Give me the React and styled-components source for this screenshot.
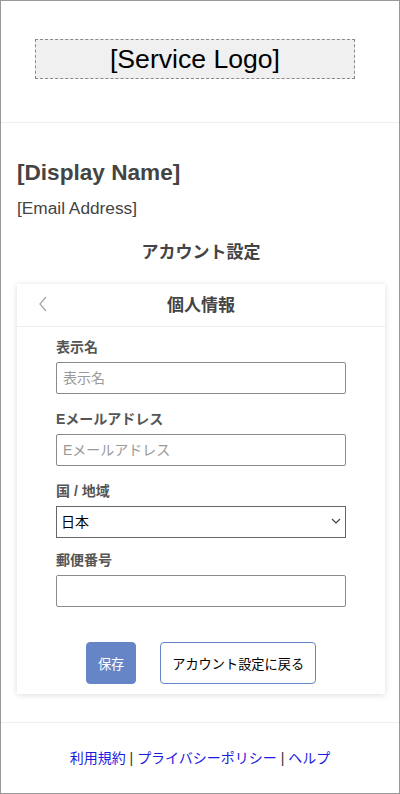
import React from 'react';
import styled, { createGlobalStyle } from 'styled-components';

const GlobalStyle = createGlobalStyle`
  html, body {
    margin: 0;
    padding: 0;
    background: #fff;
  }
  * {
    box-sizing: border-box;
  }
`;

const FONT = `"Liberation Sans", Arial, "Noto Sans CJK JP", sans-serif`;

const Frame = styled.div`
  width: 400px;
  height: 794px;
  border: 1px solid #999;
  overflow: hidden;
  font-family: ${FONT};
  color: #444;
  display: flex;
  flex-direction: column;
`;

const Header = styled.header`
  display: flex;
  justify-content: flex-start;
  padding: 38px 0 43px 34px;
  border-bottom: 1px solid #eee;
`;

const LogoBox = styled.div`
  width: 320px;
  height: 40px;
  border: 1px dashed #888;
  background: #f0f0f0;
  color: #000;
  font-size: 26.6px;
  line-height: 38px;
  text-align: center;
`;

const Main = styled.main`
  padding: 37px 14px 0 16px;
`;

const DisplayName = styled.h2`
  margin: 0;
  font-size: 22.6px;
  line-height: 26px;
  font-weight: bold;
  color: #444;
`;

const Email = styled.p`
  margin: 12px 0 0;
  font-size: 17.3px;
  line-height: 20px;
  color: #444;
`;

const SectionTitle = styled.h3`
  margin: 23px 0 19px;
  font-size: 17px;
  line-height: 24px;
  font-weight: bold;
  text-align: center;
  color: #444;
`;

const Card = styled.section`
  width: 368px;
  background: #fff;
  box-shadow: 0 1px 6px rgba(0, 0, 0, 0.14);
`;

const CardHeader = styled.div`
  position: relative;
  height: 43px;
  display: flex;
  align-items: center;
  justify-content: center;
  padding-bottom: 4px;
  border-bottom: 1px solid #eee;
`;

const BackButton = styled.button`
  position: absolute;
  left: 16px;
  top: 10px;
  width: 20px;
  height: 20px;
  padding: 0;
  border: none;
  background: none;
  display: flex;
  align-items: center;
  justify-content: center;
  cursor: pointer;
`;

const CardTitle = styled.h4`
  margin: 0;
  font-size: 17px;
  font-weight: bold;
  color: #444;
`;

const Form = styled.form`
  display: flex;
  flex-direction: column;
  padding: 10px 39px 10px;
`;

const Field = styled.div`
  display: flex;
  flex-direction: column;
  margin-bottom: ${({ $gap }) => $gap};
`;

const Label = styled.label`
  font-size: 14px;
  line-height: 20px;
  font-weight: bold;
  color: #555;
  margin-bottom: 5px;
`;

const Input = styled.input`
  width: 290px;
  height: 32px;
  border: 1px solid #8a8a8a;
  border-radius: 2px;
  padding: 0 6px;
  font-family: ${FONT};
  font-size: 14px;
  color: #222;
  background: #fff;

  &::placeholder {
    color: #999;
  }
`;

const SelectWrap = styled.div`
  position: relative;
  width: 290px;
`;

const Select = styled.select`
  appearance: none;
  width: 290px;
  height: 32px;
  border: 1px solid #666;
  border-radius: 0;
  padding: 0 24px 0 4px;
  font-family: ${FONT};
  font-size: 14px;
  color: #000;
  background: #fff;
`;

const SelectArrow = styled.svg`
  position: absolute;
  right: 5px;
  top: 12px;
  pointer-events: none;
`;

const Actions = styled.div`
  display: flex;
  justify-content: center;
  gap: 24px;
`;

const Button = styled.button`
  height: 42px;
  padding: 0 11px;
  border-radius: 4px;
  border: 1px solid #6685c7;
  font-family: ${FONT};
  font-size: 13.2px;
  cursor: pointer;
  background: ${({ $primary }) => ($primary ? '#6685c7' : '#fff')};
  color: ${({ $primary }) => ($primary ? '#fff' : '#000')};
`;

const Footer = styled.footer`
  margin-top: 28px;
  border-top: 1px solid #eee;
  padding-top: 25px;
  text-align: center;
  font-size: 14px;
  line-height: 20px;
  color: #333;
`;

const FooterLink = styled.a`
  color: #1a1ae0;
  text-decoration: none;
`;

const fields = [
  { id: 'name', label: '表示名', placeholder: '表示名' },
  { id: 'email', label: 'Eメールアドレス', placeholder: 'Eメールアドレス' },
];

export default function App() {
  return (
    <>
      <GlobalStyle />
      <Frame>
        <Header>
          <LogoBox>[Service Logo]</LogoBox>
        </Header>
        <Main>
          <DisplayName>[Display Name]</DisplayName>
          <Email>[Email Address]</Email>
          <SectionTitle>アカウント設定</SectionTitle>
          <Card>
            <CardHeader>
              <BackButton type="button" aria-label="戻る">
                <svg width="10" height="16" viewBox="0 0 10 16">
                  <path d="M8 1 L2 8 L8 15" fill="none" stroke="#aaa" strokeWidth="1.3" />
                </svg>
              </BackButton>
              <CardTitle>個人情報</CardTitle>
            </CardHeader>
            <Form onSubmit={(e) => e.preventDefault()}>
              {fields.map((f) => (
                <Field key={f.id} $gap="15px">
                  <Label htmlFor={f.id}>{f.label}</Label>
                  <Input id={f.id} placeholder={f.placeholder} />
                </Field>
              ))}
              <Field $gap="12px">
                <Label htmlFor="country">国 / 地域</Label>
                <SelectWrap>
                  <Select id="country" defaultValue="jp">
                    <option value="jp">日本</option>
                  </Select>
                  <SelectArrow width="10" height="7" viewBox="0 0 10 7">
                    <path d="M1 1 L5 5 L9 1" fill="none" stroke="#444" strokeWidth="1.2" />
                  </SelectArrow>
                </SelectWrap>
              </Field>
              <Field $gap="35px">
                <Label htmlFor="postal">郵便番号</Label>
                <Input id="postal" />
              </Field>
              <Actions>
                <Button type="submit" $primary>保存</Button>
                <Button type="button">アカウント設定に戻る</Button>
              </Actions>
            </Form>
          </Card>
        </Main>
        <Footer>
          <FooterLink href="#">利用規約</FooterLink> | <FooterLink href="#">プライバシーポリシー</FooterLink> | <FooterLink href="#">ヘルプ</FooterLink>
        </Footer>
      </Frame>
    </>
  );
}
